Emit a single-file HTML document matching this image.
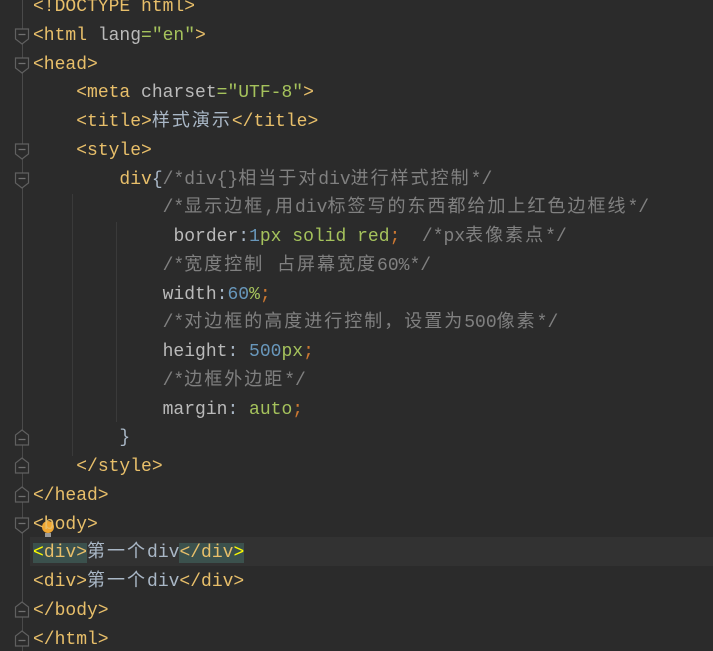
<!DOCTYPE html>
<html><head><meta charset="utf-8"><style>
html,body{margin:0;padding:0;background:#2b2b2b;width:713px;height:651px;overflow:hidden;position:relative}
.code{position:absolute;left:33px;top:-7px;font-family:"Liberation Mono","Noto Sans CJK SC",monospace;font-size:18px;line-height:28.75px;white-space:pre;color:#a9b7c6}
.t{color:#e8bf6a}.a{color:#bababa}.s{color:#a5c25c}.m{color:#808080}.n{color:#6897bb}.k{color:#cc7832}
.c{letter-spacing:2px}
.hl{background:#3b514d}.y{color:#fcfc00}
.cur{position:absolute;left:30px;right:0;top:537px;height:29px;background:#323232}
.g{position:absolute;width:1px;background:#3a3a3a}
</style></head><body>
<div class="cur"></div>
<div class="g" style="left:22px;top:0;height:651px;background:#4a4a4a"></div>
<div class="g" style="left:72px;top:194px;height:262px"></div>
<div class="g" style="left:116px;top:222px;height:200px"></div>
<svg width="713" height="651" style="position:absolute;left:0;top:0">
<g transform="translate(0,1.5)">
<g fill="#2b2b2b" stroke="#606060" stroke-width="1.2">
<path d="M15.5 27.5h13v10l-6.5 5-6.5-5z"/><path d="M15.5 56.5h13v10l-6.5 5-6.5-5z"/>
<path d="M15.5 142.5h13v10l-6.5 5-6.5-5z"/><path d="M15.5 171.5h13v10l-6.5 5-6.5-5z"/>
<path d="M15.5 516.5h13v10l-6.5 5-6.5-5z"/>
<path d="M15.5 443.5h13v-10l-6.5-5-6.5 5z"/><path d="M15.5 471.5h13v-10l-6.5-5-6.5 5z"/>
<path d="M15.5 500.5h13v-10l-6.5-5-6.5 5z"/><path d="M15.5 615.5h13v-10l-6.5-5-6.5 5z"/>
<path d="M15.5 644.5h13v-10l-6.5-5-6.5 5z"/>
</g>
<g stroke="#707070" stroke-width="1.2">
<path d="M18.5 33h7M18.5 62h7M18.5 148h7M18.5 177h7M18.5 522h7M18.5 438h7M18.5 466h7M18.5 495h7M18.5 610h7M18.5 639h7"/>
</g>
</g>
<circle cx="48" cy="527" r="6" fill="#f0a732"/><rect x="45" y="533" width="6" height="4" fill="#9a9a9a"/>
</svg>
<div class="code"><span class="t">&lt;!DOCTYPE html&gt;</span>
<span class="t">&lt;html </span><span class="a">lang</span><span class="s">="en"</span><span class="t">&gt;</span>
<span class="t">&lt;head&gt;</span>
    <span class="t">&lt;meta </span><span class="a">charset</span><span class="s">="UTF-8"</span><span class="t">&gt;</span>
    <span class="t">&lt;title&gt;</span><span class="c">样式演示</span><span class="t">&lt;/title&gt;</span>
    <span class="t">&lt;style&gt;</span>
        <span class="t">div</span>{<span class="m">/*div{}<span class="c">相当于对</span>div<span class="c">进行样式控制</span>*/</span>
            <span class="m">/*<span class="c">显示边框</span>,<span class="c">用</span>div<span class="c">标签写的东西都给加上红色边框线</span>*/</span>
             <span class="a">border</span>:<span class="n">1</span><span class="s">px solid red</span><span class="k">;</span>  <span class="m">/*px<span class="c">表像素点</span>*/</span>
            <span class="m">/*<span class="c">宽度控制 占屏幕宽度</span>60%*/</span>
            <span class="a">width</span>:<span class="n">60</span><span class="s">%</span><span class="k">;</span>
            <span class="m">/*<span class="c">对边框的高度进行控制，设置为</span>500<span class="c">像素</span>*/</span>
            <span class="a">height</span>: <span class="n">500</span><span class="s">px</span><span class="k">;</span>
            <span class="m">/*<span class="c">边框外边距</span>*/</span>
            <span class="a">margin</span>: <span class="s">auto</span><span class="k">;</span>
        }
    <span class="t">&lt;/style&gt;</span>
<span class="t">&lt;/head&gt;</span>
<span class="t">&lt;body&gt;</span>
<span class="t hl"><span class="y">&lt;</span>div&gt;</span><span class="c">第一个</span>div<span class="t hl">&lt;/div<span class="y">&gt;</span></span>
<span class="t">&lt;div&gt;</span><span class="c">第一个</span>div<span class="t">&lt;/div&gt;</span>
<span class="t">&lt;/body&gt;</span>
<span class="t">&lt;/html&gt;</span></div>
</body></html>
